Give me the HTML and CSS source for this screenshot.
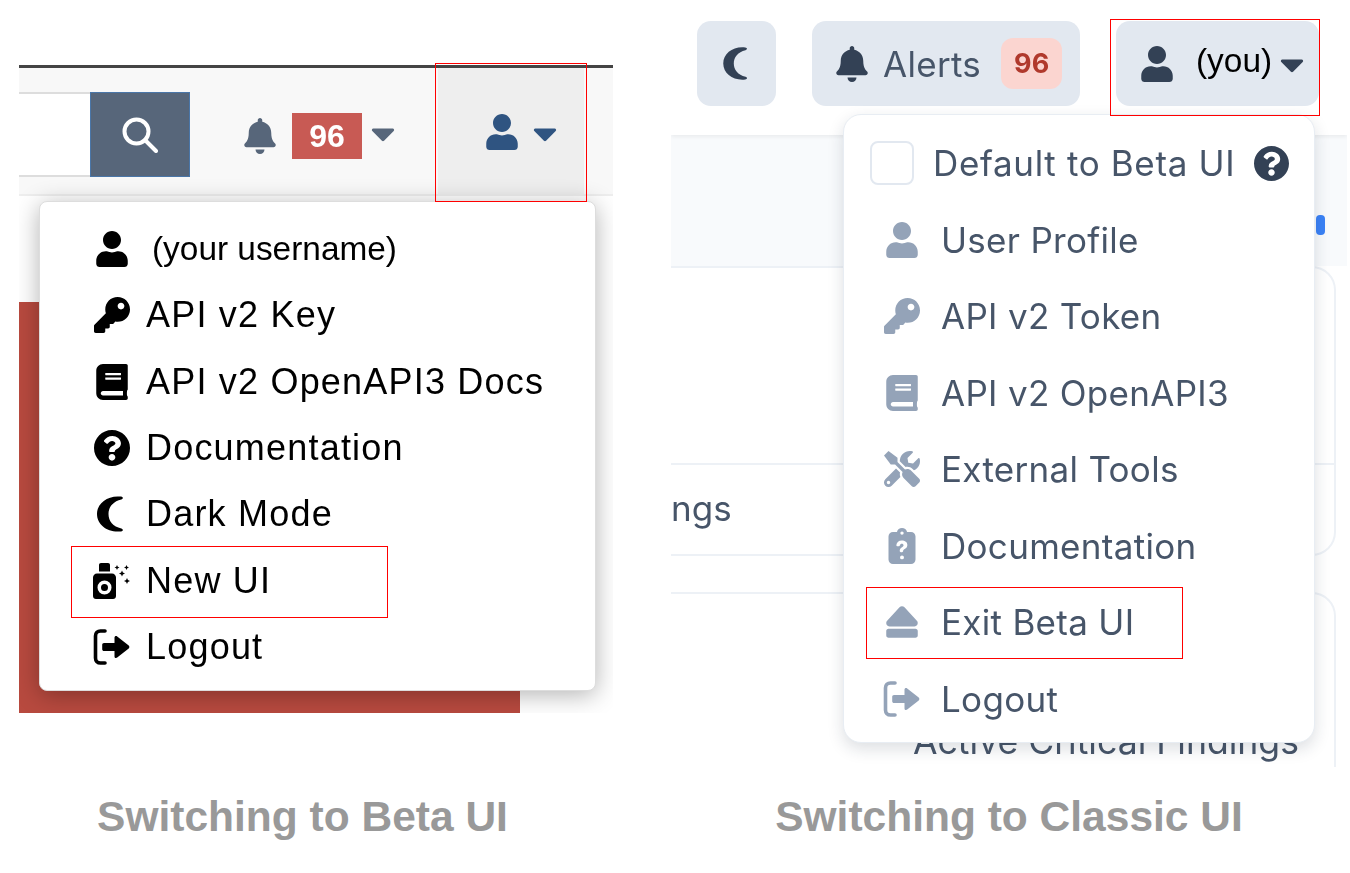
FILE: index.html
```html
<!DOCTYPE html>
<html lang="en">
<head>
    <meta charset="UTF-8">
    <meta name="viewport" content="width=device-width, initial-scale=1.0">
    <title>Switching UI</title>
    <link rel="stylesheet" href="styles.css">
</head>
<body>

<svg class="icon-defs" width="0" height="0" aria-hidden="true">
    <symbol id="i-user" viewBox="0 0 448 512"><path d="M224 256c70.7 0 128-57.3 128-128S294.7 0 224 0 96 57.3 96 128s57.3 128 128 128zm89.6 32h-16.7c-22.2 10.2-46.9 16-72.9 16s-50.6-5.8-72.9-16h-16.7C60.2 288 0 348.2 0 422.4V464c0 26.5 21.5 48 48 48h352c26.5 0 48-21.5 48-48v-41.6c0-74.2-60.2-134.4-134.4-134.4z"/></symbol>
    <symbol id="i-bell" viewBox="0 0 448 512"><path d="M224 512c35.32 0 63.97-28.65 63.97-64H160.03c0 35.35 28.65 64 63.97 64zm215.39-149.71c-19.32-20.76-55.47-51.99-55.47-154.29 0-77.7-54.48-139.9-127.94-155.16V32c0-17.67-14.32-32-31.98-32s-31.98 14.33-31.98 32v20.84C118.56 68.1 64.08 130.3 64.08 208c0 102.3-36.15 133.53-55.47 154.29-6 6.45-8.66 14.16-8.61 21.71.11 16.4 12.98 32 32.1 32h383.8c19.12 0 32-15.6 32.1-32 .05-7.55-2.61-15.27-8.61-21.71z"/></symbol>
    <symbol id="i-caret" viewBox="0 0 320 200"><path d="M31.3 20h257.3c17.8 0 26.7 21.5 14.1 34.1L174.1 182.8c-7.8 7.8-20.5 7.8-28.3 0L17.2 54.1C4.6 41.5 13.5 20 31.3 20z"/></symbol>
    <symbol id="i-key" viewBox="0 0 512 512"><path d="M512 176.001C512 273.203 433.202 352 336 352c-11.22 0-22.19-1.062-32.827-3.069l-24.012 27.014A23.999 23.999 0 0 1 261.223 384H224v40c0 13.255-10.745 24-24 24h-40v40c0 13.255-10.745 24-24 24H24c-13.255 0-24-10.745-24-24v-78.059c0-6.365 2.529-12.47 7.029-16.971l161.802-161.802C163.108 213.814 160 195.271 160 176 160 78.798 238.797.001 335.999 0 433.488-.001 512 78.511 512 176.001zM336 128c0 26.51 21.49 48 48 48s48-21.49 48-48-21.49-48-48-48-48 21.49-48 48z"/></symbol>
    <symbol id="i-book" viewBox="0 0 448 512"><path d="M448 360V24c0-13.3-10.7-24-24-24H96C43 0 0 43 0 96v320c0 53 43 96 96 96h328c13.3 0 24-10.7 24-24v-16c0-7.5-3.5-14.3-8.9-18.7-4.2-15.4-4.2-59.3 0-74.7 5.4-4.3 8.9-11.1 8.9-18.6zM128 134c0-3.3 2.7-6 6-6h212c3.3 0 6 2.7 6 6v20c0 3.3-2.7 6-6 6H134c-3.3 0-6-2.7-6-6v-20zm0 64c0-3.3 2.7-6 6-6h212c3.3 0 6 2.7 6 6v20c0 3.3-2.7 6-6 6H134c-3.3 0-6-2.7-6-6v-20zm253.4 250H96c-17.7 0-32-14.3-32-32 0-17.6 14.4-32 32-32h285.4c-1.9 17.1-1.9 46.9 0 64z"/></symbol>
    <symbol id="i-help" viewBox="8 8 496 496"><path d="M504 256c0 136.997-111.043 248-248 248S8 392.997 8 256C8 119.083 119.043 8 256 8s248 111.083 248 248zM262.655 90c-54.497 0-89.255 22.957-116.549 63.758-3.536 5.286-2.353 12.415 2.715 16.258l34.699 26.31c5.205 3.947 12.621 3.008 16.665-2.122 17.864-22.658 30.113-35.797 57.303-35.797 20.429 0 45.698 13.148 45.698 32.958 0 14.976-12.363 22.667-32.534 33.976C247.128 238.528 216 254.941 216 296v4c0 6.627 5.373 12 12 12h56c6.627 0 12-5.373 12-12v-1.333c0-28.462 83.186-29.647 83.186-106.667 0-58.002-60.165-102-116.531-102zM256 338c-25.365 0-46 20.635-46 46 0 25.364 20.635 46 46 46s46-20.636 46-46c0-25.365-20.635-46-46-46z"/></symbol>
    <symbol id="i-moon" viewBox="0 0 30 36"><path d="M24 .600C11 -1 0 7 0 18s11 19 24 17.400c2.400-.3 2.400-2.300.3-2.900C16 30.500 11.500 25 11.500 18S16 5.500 24.300 3.500c2.100-.6 2.100-2.600-.3-2.900z"/></symbol>
    <symbol id="i-logout" viewBox="0 0 38 36"><path d="M12 2H7.500C4.500 2 2.500 4 2.500 7v22c0 3 2 5 5 5H12" fill="none" stroke="currentColor" stroke-width="3.600" stroke-linecap="round"/><path d="M11 14h10.500V8.500c0-1.400 1.600-2.100 2.700-1.100l11.500 9.200c.9.800.9 2 0 2.800l-11.500 9.200c-1.100 1-2.700.3-2.700-1.100V22H11c-1 0-1.800-.8-1.800-1.800v-4.400c0-1 .8-1.800 1.800-1.800z"/></symbol>
    <symbol id="i-eject" viewBox="0 0 448 512"><path d="M448 384v64c0 17.673-14.327 32-32 32H32c-17.673 0-32-14.327-32-32v-64c0-17.673 14.327-32 32-32h384c17.673 0 32 14.327 32 32zM48.053 320h351.886c41.651 0 63.581-49.674 35.383-80.435L259.383 47.558c-19.014-20.743-51.751-20.744-70.767 0L12.670 239.565C-15.475 270.268 6.324 320 48.053 320z"/></symbol>
    <symbol id="i-tools" viewBox="0 0 512 512"><path d="M501.1 395.7L384 278.6c-23.1-23.1-57.6-27.6-85.4-13.9L192 158.1V96L64 0 0 64l96 128h62.1l106.6 106.6c-13.6 27.8-9.2 62.3 13.9 85.4l117.1 117.1c14.6 14.6 38.2 14.6 52.7 0l52.7-52.7c14.5-14.6 14.5-38.2 0-52.7zM331.7 225c28.3 0 54.9 11 74.9 31l19.4 19.4c15.8-6.9 30.8-16.5 43.8-29.5 37.1-37.1 49.7-89.3 37.9-136.7-2.2-9-13.5-12.1-20.1-5.5l-74.4 74.4-67.9-11.3L334 98.9l74.4-74.4c6.6-6.6 3.4-17.9-5.7-20.2-47.4-11.7-99.6.9-136.6 37.9-28.5 28.5-41.9 66.1-41.2 103.6l82.1 82.1c8.1-1.9 16.5-2.9 24.7-2.9zm-103.9 82l-56.7-56.7L18.7 402.8c-25 25-25 65.5 0 90.5s65.5 25 90.5 0l123.6-123.6c-7.6-19.9-9.9-41.6-5-62.7zM64 472c-13.2 0-24-10.8-24-24 0-13.3 10.7-24 24-24s24 10.7 24 24c0 13.2-10.7 24-24 24z"/></symbol>
    <symbol id="i-clip" viewBox="0 0 384 512"><path fill-rule="evenodd" d="M192 0c-35 0-64 23-72 56H64C29 56 0 85 0 120v328c0 35 29 64 64 64h256c35 0 64-29 64-64V120c0-35-29-64-64-64h-56C256 23 227 0 192 0zm0 48a24 24 0 1 1 0 48 24 24 0 1 1 0-48zM188 178c-42 0-72 27-76 64-1 10 7 18 17 18h16c8 0 15-6 17-14 3-14 13-22 27-22 15 0 25 9 25 21 0 11-6 17-22 27-21 13-32 28-32 50v6c0 9 7 16 16 16h16c9 0 16-7 16-16 0-11 5-17 22-28 24-15 38-32 38-59 0-38-33-63-80-63zm4 212a28 28 0 1 0 0 56 28 28 0 1 0 0-56z"/></symbol>
    <symbol id="i-spray" viewBox="0 0 38 36"><path fill-rule="evenodd" d="M8 0h7c1.200 0 2 .8 2 2v6.500H6V2c0-1.200.8-2 2-2zM4 10.500h15c2.200 0 4 1.800 4 4V33c0 1.700-1.300 3-3 3H3c-1.700 0-3-1.300-3-3V14.500c0-2.200 1.800-4 4-4zM11.500 17.500a7 7 0 1 0 0 14 7 7 0 1 0 0-14zm0 3.500a3.500 3.500 0 1 1 0 7 3.500 3.500 0 1 1 0-7z"/><path d="M24 2l.8 1.700 1.700.8-1.700.8L24 7l-.8-1.700-1.700-.8 1.700-.8zM33.500 2l.8 1.700 1.700.8-1.700.8-.8 1.700-.8-1.700-1.700-.8 1.700-.8zM29 7.500l.9 2.100 2.100.9-2.100.9-.9 2.100-.9-2.100-2.100-.9 2.100-.9zM34 15l.9 2.100 2.100.9-2.100.9-.9 2.100-.9-2.100-2.100-.9 2.100-.9z"/></symbol>
</svg>

<main class="compare">

    <figure class="figure figure-classic">
        <div class="shot shot-classic">
            <div class="shot-clip">
                <header class="classic-nav">
                    <div class="classic-search">
                        <span class="classic-input"></span>
                        <span class="classic-search-btn">
                            <svg class="search-glyph" viewBox="0 0 36 36"><circle cx="14.500" cy="14.500" r="12"/><path d="M23 23l11 11"/></svg>
                        </span>
                    </div>
                    <div class="classic-alerts">
                        <svg class="ico ico-slate"><use href="#i-bell"/></svg>
                        <span class="classic-badge">96</span>
                        <svg class="caret caret-slate"><use href="#i-caret"/></svg>
                    </div>
                    <div class="classic-user">
                        <svg class="ico ico-navy"><use href="#i-user"/></svg>
                        <svg class="caret caret-navy"><use href="#i-caret"/></svg>
                    </div>
                </header>
                <div class="classic-page"><div class="danger-panel"></div></div>

                <nav class="menu menu-classic">
                    <a class="menu-row"><svg class="ico"><use href="#i-user"/></svg><span class="annot annot-name">(your username)</span></a>
                    <a class="menu-row"><svg class="ico"><use href="#i-key"/></svg>API v2 Key</a>
                    <a class="menu-row"><svg class="ico"><use href="#i-book"/></svg>API v2 OpenAPI3 Docs</a>
                    <a class="menu-row"><svg class="ico"><use href="#i-help"/></svg>Documentation</a>
                    <a class="menu-row"><svg class="ico"><use href="#i-moon"/></svg>Dark Mode</a>
                    <a class="menu-row"><svg class="ico"><use href="#i-spray"/></svg>New UI</a>
                    <a class="menu-row"><svg class="ico"><use href="#i-logout"/></svg>Logout</a>
                </nav>
            </div>
            <span class="callout callout-user"></span>
            <span class="callout callout-new"></span>
        </div>
        <figcaption class="caption caption-classic">Switching to Beta UI</figcaption>
    </figure>

    <figure class="figure figure-beta">
        <div class="shot shot-beta">
            <div class="shot-clip">
                <header class="beta-nav">
                    <button class="beta-btn beta-moon"><svg class="ico-moon"><use href="#i-moon"/></svg></button>
                    <button class="beta-btn beta-alerts">
                        <svg class="ico ico-dark"><use href="#i-bell"/></svg>
                        <span class="beta-alerts-label">Alerts</span>
                        <span class="beta-badge">96</span>
                    </button>
                    <button class="beta-btn beta-user">
                        <svg class="ico ico-dark"><use href="#i-user"/></svg>
                        <span class="annot annot-you">(you)</span>
                        <svg class="caret caret-dark"><use href="#i-caret"/></svg>
                    </button>
                </header>
                <div class="beta-band"></div>
                <div class="beta-card">
                    <div class="beta-card-row"></div>
                    <div class="beta-card-row beta-card-text">ngs</div>
                </div>
                <div class="beta-card beta-card-last"><span class="beta-card-title">Active Critical Findings</span></div>
                <span class="blue-bit"></span>

                <nav class="menu menu-beta">
                    <label class="beta-default">
                        <span class="beta-check"></span>
                        <span class="beta-default-label">Default to Beta UI</span>
                        <svg class="ico-help"><use href="#i-help"/></svg>
                    </label>
                    <a class="menu-row"><svg class="ico"><use href="#i-user"/></svg>User Profile</a>
                    <a class="menu-row"><svg class="ico"><use href="#i-key"/></svg>API v2 Token</a>
                    <a class="menu-row"><svg class="ico"><use href="#i-book"/></svg>API v2 OpenAPI3</a>
                    <a class="menu-row"><svg class="ico"><use href="#i-tools"/></svg>External Tools</a>
                    <a class="menu-row"><svg class="ico"><use href="#i-clip"/></svg>Documentation</a>
                    <a class="menu-row"><svg class="ico"><use href="#i-eject"/></svg>Exit Beta UI</a>
                    <a class="menu-row"><svg class="ico"><use href="#i-logout"/></svg>Logout</a>
                </nav>
            </div>
            <span class="callout callout-you"></span>
            <span class="callout callout-exit"></span>
        </div>
        <figcaption class="caption">Switching to Classic UI</figcaption>
    </figure>

</main>

</body>
</html>
```

FILE: styles.css
```css
* { box-sizing: border-box; }

body {
    margin: 0;
    background: #fff;
    font-family: "Liberation Sans", Arial, sans-serif;
    overflow: hidden;
}
.icon-defs { position: absolute; }

.compare {
    display: flex;
    padding-left: 19px;
    gap: 58px;
}
.figure {
    margin: 0;
    display: grid;
    grid-template-rows: 767px auto;
}
.figure-classic { width: 594px; }
.figure-beta { width: 676px; }

.caption {
    margin-top: 24px;
    text-align: center;
    font-size: 42.5px;
    line-height: 52px;
    font-weight: bold;
    color: #999;
    white-space: nowrap;
}
.caption-classic { padding-right: 27px; }

.shot { position: relative; }
.shot-classic { margin-top: 65px; height: 648px; }
.shot-beta { margin-top: 20px; height: 747px; }

/* the source pictures are upscaled, the red marks on top of them are not */
.shot-clip {
    position: relative;
    height: 100%;
    overflow: hidden;
    background: #fff;
    filter: blur(.5px);
}

.callout {
    position: absolute;
    border: 1px solid #f00;
    pointer-events: none;
}
.callout-user { left: 416px; top: -2px; width: 152px; height: 139px; }
.callout-new { left: 52px; top: 481px; width: 317px; height: 72px; }
.callout-you { left: 439px; top: -1px; width: 210px; height: 97px; }
.callout-exit { left: 195px; top: 567px; width: 317px; height: 72px; }

.ico { width: 38px; height: 36px; flex: none; }
.caret { flex: none; width: 24px; height: 15px; }

/* classic ui */
.classic-nav {
    height: 131px;
    display: flex;
    align-items: flex-start;
    background: #f8f8f8;
    border-top: 3px solid #444;
    border-bottom: 2px solid #eee;
}
.classic-search { display: flex; margin-top: 24px; }
.classic-input {
    width: 71px;
    height: 85px;
    background: #fff;
    border-top: 2px solid #ddd;
    border-bottom: 2px solid #ddd;
}
.classic-search-btn {
    width: 100px;
    height: 85px;
    display: flex;
    align-items: center;
    justify-content: center;
    background: #57667a;
    border: 1px solid #4a76a8;
}
.search-glyph {
    width: 36px;
    height: 36px;
    fill: none;
    stroke: #fff;
    stroke-width: 4;
    stroke-linecap: round;
}
.classic-alerts {
    display: flex;
    align-items: center;
    margin: 45px 0 0 51px;
}
.ico-slate { fill: #57667a; }
.classic-badge {
    width: 70px;
    height: 46px;
    margin: 0 9px 0 13px;
    background: #c85a54;
    color: #fff;
    font-size: 32px;
    font-weight: bold;
    line-height: 46px;
    text-align: center;
}
.caret-slate { fill: #57667a; margin-top: -4px; }
.classic-user {
    width: 146px;
    height: 126px;
    margin-left: 43px;
    padding: 46px 0 0 45px;
    display: flex;
    align-items: flex-start;
    background: #eee;
}
.ico-navy { fill: #2f5481; }
.caret-navy { fill: #2f5481; margin: 13px 0 0 12px; }

.classic-page { height: 517px; padding-top: 106px; background: #fff; }
.danger-panel {
    width: 501px;
    height: 411px;
    background: #b84a3f;
}

.menu {
    position: absolute;
    background: #fff;
    display: flex;
    flex-direction: column;
}
.menu-row { display: flex; align-items: center; }

.menu-classic {
    left: 20px;
    top: 136px;
    width: 557px;
    height: 490px;
    padding: 14px 0 0 53px;
    border: 1px solid #ddd;
    border-radius: 8px;
    box-shadow: 0 4px 24px rgba(0, 0, 0, .3);
    color: #000;
    font-size: 36px;
    letter-spacing: 1.2px;
    white-space: nowrap;
}
.menu-classic .menu-row { height: 66.3px; gap: 15px; }
.menu-classic .ico { fill: #000; color: #000; }
.annot {
    color: #000;
    font-family: "Liberation Sans", Arial, sans-serif;
    font-size: 33.4px;
    letter-spacing: 0;
}
.annot-name { margin-left: 6px; }

/* beta ui */
.beta-nav {
    height: 115px;
    display: flex;
    align-items: flex-start;
    padding: 1px 0 0 26px;
    background: #fff;
    box-shadow: 0 2px 4px rgba(0, 0, 0, .06);
    position: relative;
}
.beta-btn {
    height: 85px;
    display: flex;
    align-items: center;
    border: none;
    border-radius: 14px;
    background: #e2e8f0;
    color: #475569;
    font-family: Inter, sans-serif;
    padding: 0;
}
.beta-moon { width: 79px; justify-content: center; }
.ico-moon { width: 28px; height: 33px; fill: #334155; }
.beta-alerts { width: 268px; margin-left: 36px; padding-left: 21px; }
.ico-dark { fill: #334155; }
.beta-alerts-label { margin-left: 12px; font-size: 35px; letter-spacing: .3px; }
.beta-badge {
    width: 61px;
    height: 51px;
    margin-left: 20px;
    border-radius: 12px;
    background: #fbd5d0;
    color: #b0392c;
    font-size: 27px;
    font-weight: 700;
    line-height: 51px;
    text-align: center;
}
.beta-user { width: 203px; margin-left: 36px; padding-left: 22px; }
.annot-you { margin: -6px 0 0 20px; }
.caret-dark { fill: #334155; margin: 4px 0 0 8px; }

.beta-band { height: 131px; background: #f8fafc; }
.beta-card {
    width: 665px;
    border-top: 2px solid #edf1f6;
    border-right: 2px solid #edf1f6;
    border-bottom: 2px solid #edf1f6;
    border-radius: 0 24px 24px 0;
}
.beta-card-row { height: 195px; }
.beta-card-text {
    height: 91px;
    border-top: 2px solid #edf1f6;
    color: #475569;
    font-family: Inter, sans-serif;
    font-size: 35px;
    line-height: 87px;
}
.beta-card-last {
    height: 200px;
    margin-top: 36px;
    padding: 126px 0 0 242px;
    border-bottom: none;
    color: #475569;
    font-family: Inter, sans-serif;
    font-size: 35.6px;
    white-space: nowrap;
}
.blue-bit {
    position: absolute;
    left: 645px;
    top: 195px;
    width: 9px;
    height: 20px;
    border-radius: 4px;
    background: #3b82f6;
}

.menu-beta {
    left: 172px;
    top: 94px;
    width: 472px;
    height: 629px;
    padding: 10px 0 0 39px;
    border: 1px solid #e8edf3;
    border-radius: 18px;
    box-shadow: 0 6px 16px rgba(30, 41, 59, .15);
    color: #475569;
    font-family: Inter, sans-serif;
    font-size: 35px;
    letter-spacing: .3px;
    white-space: nowrap;
}
.menu-beta .menu-row { height: 76.5px; gap: 20px; }
.menu-beta .ico { fill: #94a3b8; color: #94a3b8; }
.beta-default {
    height: 76.5px;
    display: flex;
    align-items: center;
    margin-left: -13px;
}
.beta-check {
    width: 44px;
    height: 44px;
    border: 2px solid #e2e8f0;
    border-radius: 8px;
}
.beta-default-label { margin-left: 19px; letter-spacing: .65px; }
.ico-help { width: 35px; height: 35px; margin-left: 19px; fill: #334155; }
```
